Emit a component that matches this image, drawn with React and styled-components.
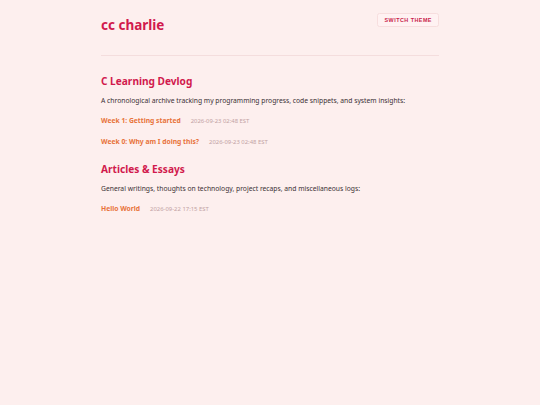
import React from "react";
import styled, { createGlobalStyle } from "styled-components";

const GlobalStyle = createGlobalStyle`
  html, body {
    margin: 0;
    padding: 0;
    background: #fdefee;
  }
  body {
    font-family: "Noto Sans", "Open Sans", sans-serif;
    color: #3b3034;
  }
`;

const sections = [
  {
    title: "C Learning Devlog",
    intro:
      "A chronological archive tracking my programming progress, code snippets, and system insights:",
    posts: [
      { title: "Week 1: Getting started", date: "2026-09-23 02:48 EST" },
      { title: "Week 0: Why am I doing this?", date: "2026-09-23 02:48 EST" },
    ],
  },
  {
    title: "Articles & Essays",
    intro:
      "General writings, thoughts on technology, project recaps, and miscellaneous logs:",
    posts: [{ title: "Hello World", date: "2026-09-22 17:15 EST" }],
  },
];

function App() {
  return (
    <Page>
      <GlobalStyle />
      <Header>
        <SiteTitle>cc charlie</SiteTitle>
        <ThemeButton type="button">Switch Theme</ThemeButton>
      </Header>
      <Main>
        {sections.map((s) => (
          <Section key={s.title}>
            <SectionTitle>{s.title}</SectionTitle>
            <Intro>{s.intro}</Intro>
            <PostList>
              {s.posts.map((p) => (
                <PostRow key={p.title}>
                  <PostLink href="#">{p.title}</PostLink>
                  <PostDate>{p.date}</PostDate>
                </PostRow>
              ))}
            </PostList>
          </Section>
        ))}
      </Main>
    </Page>
  );
}

const Page = styled.div`
  width: 338px;
  margin: 0 auto;
  padding-top: 13px;
  min-height: 405px;
  box-sizing: border-box;
`;

const Header = styled.header`
  display: flex;
  justify-content: space-between;
  align-items: flex-start;
  padding-bottom: 19.7px;
  border-bottom: 1px solid #f4dddd;
`;

const SiteTitle = styled.h1`
  margin: 2.3px 0 0;
  font-size: 13.5px;
  line-height: 20px;
  font-weight: 700;
  color: #d11a4d;
`;

const ThemeButton = styled.button`
  box-sizing: border-box;
  width: 62px;
  height: 14px;
  padding: 0 0 0 0.5px;
  border: 1px solid #f7dede;
  border-radius: 2.5px;
  background: #fff2f2;
  font-family: "Liberation Sans", Arial, sans-serif;
  font-size: 5.4px;
  font-weight: 700;
  letter-spacing: 0.48px;
  text-transform: uppercase;
  color: #c91d4c;
  cursor: pointer;
`;

const Main = styled.main`
  padding-top: 18.1px;
  display: flex;
  flex-direction: column;
  gap: 15.3px;
`;

const Section = styled.section`
  display: flex;
  flex-direction: column;
`;

const SectionTitle = styled.h2`
  margin: 0;
  font-size: 10.125px;
  line-height: 14px;
  font-weight: 700;
  color: #d11a4d;
`;

const Intro = styled.p`
  margin: 7.5px 0 0;
  font-size: 6.75px;
  line-height: 10px;
  color: #3b3034;
`;

const PostList = styled.div`
  display: flex;
  flex-direction: column;
  gap: 10.7px;
  margin-top: 10.7px;
`;

const PostRow = styled.div`
  display: flex;
  align-items: baseline;
  gap: 10px;
  line-height: 10px;
`;

const PostLink = styled.a`
  font-size: 6.75px;
  font-weight: 700;
  color: #e8733a;
  text-decoration: none;
`;

const PostDate = styled.span`
  font-size: 5.9px;
  color: #c2a2a3;
`;

export default App;
